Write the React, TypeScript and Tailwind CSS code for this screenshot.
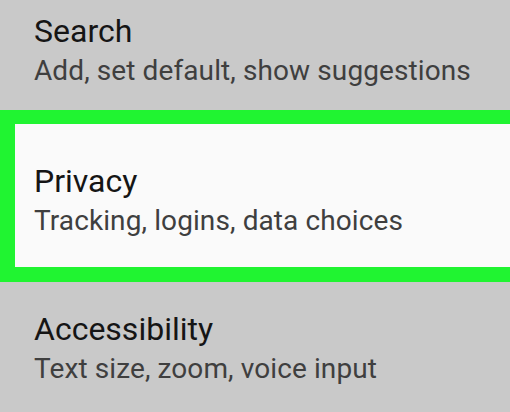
import React from 'react';

interface SettingRowProps {
  title: string;
  subtitle: string;
}

const SettingText: React.FC<SettingRowProps> = ({ title, subtitle }) => (
  <div className="flex flex-col">
    <span className="text-[32px] leading-[38px] text-[#151515]">{title}</span>
    <span className="mt-[5px] text-[28px] leading-[32px] tracking-[0.1px] text-[#3f3f3f] whitespace-nowrap">
      {subtitle}
    </span>
  </div>
);

export default function App() {
  return (
    <div
      className="flex h-[412px] w-[510px] flex-col overflow-hidden bg-[#c9c9c9]"
      style={{ fontFamily: 'Roboto, "Noto Sans", sans-serif' }}
    >
      {/* Search */}
      <div className="h-[110px] shrink-0 pl-[34px] pt-[12px]">
        <SettingText title="Search" subtitle="Add, set default, show suggestions" />
      </div>

      {/* Privacy - highlighted */}
      <div className="h-[172px] shrink-0 bg-[#20f431] pb-[15px] pl-[15px] pt-[14px]">
        <div className="h-full bg-[#fafafa] pl-[19px] pt-[38px]">
          <SettingText title="Privacy" subtitle="Tracking, logins, data choices" />
        </div>
      </div>

      {/* Accessibility */}
      <div className="flex-1 pl-[34px] pt-[28px]">
        <SettingText title="Accessibility" subtitle="Text size, zoom, voice input" />
      </div>
    </div>
  );
}
